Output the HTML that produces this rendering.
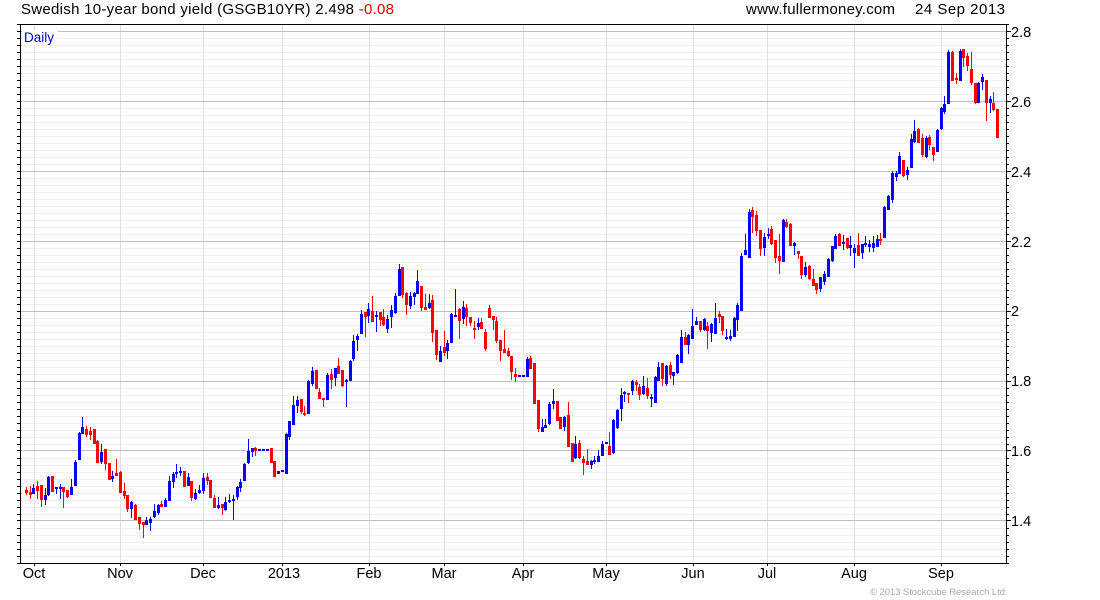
<!DOCTYPE html>
<html><head><meta charset="utf-8"><title>Swedish 10-year bond yield</title>
<style>
html,body{margin:0;padding:0;background:#fff;width:1100px;height:600px;overflow:hidden}
svg{display:block}
text{font-family:"Liberation Sans",Arial,sans-serif;fill:#000;font-size:15px}
.a{font-size:14.5px}
.m{text-anchor:middle}
</style></head><body>
<svg id="c" xmlns="http://www.w3.org/2000/svg" width="1100" height="600" viewBox="0 0 1100 600">
<g id="grid" shape-rendering="crispEdges"></g>
<rect x="22" y="30" width="36" height="15" fill="#fff"/>
<g id="candles" shape-rendering="crispEdges"></g>
<g id="frame" shape-rendering="crispEdges"></g>
<text x="21" y="14" textLength="373" lengthAdjust="spacing">Swedish 10-year bond yield (GSGB10YR) 2.498 <tspan style="fill:#e00000">-0.08</tspan></text>
<text x="746" y="14" textLength="149" lengthAdjust="spacing">www.fullermoney.com</text>
<text x="915" y="14" textLength="90" lengthAdjust="spacing">24 Sep 2013</text>
<text x="24" y="42" style="fill:#0000d0;font-size:13.5px">Daily</text>
<text class="a" x="1011" y="37">2.8</text>
<text class="a" x="1011" y="107">2.6</text>
<text class="a" x="1011" y="177">2.4</text>
<text class="a" x="1011" y="247">2.2</text>
<text class="a" x="1011" y="316">2</text>
<text class="a" x="1011" y="386">1.8</text>
<text class="a" x="1011" y="456">1.6</text>
<text class="a" x="1011" y="526">1.4</text>
<text class="a m" x="34" y="578">Oct</text>
<text class="a m" x="120" y="578">Nov</text>
<text class="a m" x="203" y="578">Dec</text>
<text class="a m" x="284" y="578">2013</text>
<text class="a m" x="369" y="578">Feb</text>
<text class="a m" x="444" y="578">Mar</text>
<text class="a m" x="523" y="578">Apr</text>
<text class="a m" x="606" y="578">May</text>
<text class="a m" x="693" y="578">Jun</text>
<text class="a m" x="767" y="578">Jul</text>
<text class="a m" x="854" y="578">Aug</text>
<text class="a m" x="941" y="578">Sep</text>
<text x="870" y="595" textLength="135" lengthAdjust="spacing" style="fill:#aaa;font-size:9.5px">© 2013 Stockcube Research Ltd</text>
</svg>
<script>
var S=[
[400,"262,285,270,279,r 258,297,276,285,r 252,282,264,282,b 243,297,258,273,r 255,321,256,300,r 264,315,285,300,b 228,288,231,285,b 228,276,228,276,r 261,282,261,267,b 252,297,261,267,b 261,324,261,276,r 270,294,270,291,r 237,285,261,285,b 180,258,186,258,b 96,180,99,180,b 51,102,81,102,b 78,111,87,105,r 81,120,93,105,r 87,132,87,132,r 120,189,123,189,r 132,192,156,186,b 147,210,147,192,r 189,240,189,240,r 213,246,228,237,b 177,228,219,228,r 213,279,216,279,r 249,297,273,288,r 285,336,285,327,r 303,354,306,327,b 312,360,315,360,r 351,390,351,372,r 366,414,366,375,r 351,375,360,375,b 351,393,357,369,b 312,354,333,351,b 312,345,315,339,b"],
[420,"243,262,252,261,r 234,261,240,261,b 168,243,183,243,b 156,204,162,186,b 132,174,156,162,b 141,168,153,159,b 153,201,153,201,r 159,198,171,198,b 183,243,183,234,r 207,240,219,237,b 195,222,210,219,b 159,222,174,213,b 159,195,171,183,r 180,234,180,234,r 225,264,234,264,r 231,267,255,264,b 252,285,252,264,r 231,273,246,270,b 222,249,240,246,b 225,300,237,243,b 198,240,201,231,b 177,216,186,204,b 129,183,132,183,b 57,132,93,129,b 84,111,84,96,b 81,108,84,93,r 88,92,88,92,b 88,92,88,92,b 88,92,88,92,b 84,129,84,129,r 123,171,123,171,r 153,162,153,162,b 150,156,150,156,b"],
[260,"519,642,522,642,b 483,540,483,531,b 408,495,435,495,b 408,459,420,438,b 417,462,417,456,r 438,468,459,465,r 360,462,363,462,b 321,378,333,372,b 330,387,330,387,r 384,417,396,417,r 414,441,414,420,r 339,420,345,420,b 327,387,342,360,r 324,378,324,354,b 294,342,318,342,r 330,381,330,378,r 357,441,360,366,b 300,363,303,363,b 225,303,243,297,b 222,273,228,240,b 150,222,162,222,b 156,231,156,171,r 129,189,147,168,b 108,186,153,186,r 153,216,165,171,b 156,198,156,180,r 147,198,171,195,r 165,219,177,207,b 135,204,150,171,b 99,162,108,159,b 12,108,27,108,b 21,114,21,105,r 96,165,99,135,r 96,147,108,138,b 96,135,99,111,b 30,102,63,102,b 78,153,78,144,r 102,150,141,150,r 102,147,129,144,b"],
[280,"45,186,60,159,r 150,240,150,225,r 198,246,213,246,b 153,228,201,219,r 180,237,189,213,b 99,189,102,189,b 27,111,105,111,b 84,177,87,123,r 63,132,81,117,b 72,138,84,111,r 111,138,111,129,r 123,177,144,150,r 114,150,129,141,b 114,147,126,147,r 147,213,156,207,r 75,114,84,114,r 108,150,108,120,r 111,189,123,183,r 180,243,180,213,r 150,219,207,219,r 204,231,213,228,r 228,300,228,276,r 264,306,282,291,r 285,291,285,291,b 285,291,285,291,b 231,291,237,291,b 228,267,234,267,r 249,372,249,372,r 360,456,360,447,r 417,456,441,456,b 417,444,435,444,b 366,435,372,432,b 327,387,363,372,b 363,423,363,423,r 411,447,411,447,r 408,453,411,441,b 366,500,405,500,r 489,546,489,546,r 468,537,492,534,b 480,537,489,534,r 528,585,537,549,r 507,555,543,555,r 540,567,543,555,b 528,552,540,546,b 510,546,528,546,b"],
[300,"423,468,432,468,b 426,432,426,432,b 396,465,438,465,r 357,462,360,459,b 327,387,330,384,b 264,363,285,327,b 273,306,276,282,b 279,309,279,285,r 240,285,243,273,b 240,273,246,255,r 252,300,261,285,r 228,285,258,282,b 234,297,264,288,r 282,321,291,297,b 228,309,231,309,b 186,243,201,243,b 189,258,189,237,r 195,258,198,252,b 186,237,195,225,r 216,255,216,228,b 162,222,165,219,b 90,189,111,189,b 96,135,111,135,r 102,162,105,135,b 27,117,78,117,b 51,75,63,75,b 63,96,63,90,r 54,93,57,90,b 66,147,78,93,r 69,126,72,99,b 9,102,54,102,b 33,69,42,51,r 48,105,48,93,r 87,120,111,117,b 90,123,108,117,b 51,111,54,111,b 9,93,15,60,b"],
[200,"159,333,168,333,b 102,165,150,165,b 27,174,36,174,b 21,99,30,51,r 33,108,45,93,r 90,168,90,147,r 99,168,111,144,b 84,117,102,108,b 78,135,87,132,r 120,189,120,174,r 102,222,168,183,r 57,186,60,186,b 57,84,66,81,r 69,138,72,138,r 126,165,129,138,b 153,177,153,162,r 168,237,168,225,r 186,231,201,225,b 195,240,198,237,r 207,258,237,258,r 249,282,249,270,r 231,276,231,267,b 213,255,222,246,b 174,231,177,231,b 138,186,138,183,b 102,147,108,147,b 99,138,102,138,r 105,150,126,132,b 114,147,114,144,r 108,168,135,144,b 132,204,144,159,b 99,168,135,168,r 132,177,132,159,b 108,141,129,135,b 120,156,132,141,b 108,156,129,144,b 105,141,117,141,b"],
[40,"579,615,597,603,r 498,594,501,594,b 465,510,468,510,b 393,489,399,480,b 393,423,399,411,b 336,402,348,402,b 360,411,360,408,r 381,420,390,405,b 282,384,297,384,b 240,309,273,306,b 264,309,267,309,r 282,351,294,345,r 288,354,294,351,b 285,330,291,315,r 321,363,321,345,r 267,336,270,336,b 201,270,204,267,b 168,222,192,216,b 30,192,36,192,b 33,123,36,123,r 99,132,114,120,r 27,123,33,123,b 27,81,27,54,r 39,93,48,78,r 36,135,87,129,r 129,192,129,189,r 126,189,129,189,b 102,150,111,126,b 120,243,120,189,r 168,219,177,189,b 156,213,189,210,r 207,294,207,294,r"]
];
var NS="http://www.w3.org/2000/svg";
function R(g,x,y,w,h,f){var r=document.createElementNS(NS,"rect");r.setAttribute("x",x);r.setAttribute("y",y);r.setAttribute("width",w);r.setAttribute("height",h);r.setAttribute("fill",f);g.appendChild(r);}
var G=document.getElementById("grid"),C=document.getElementById("candles"),F=document.getElementById("frame");
var k,y;
for(k=-1;k<=76;k++){y=Math.round(31.3+6.99*k);
 if(k%10===0)continue;
 R(G,21,y,985,1,"#f0f0f0");
 R(F,17,y,3,1,"#000");R(F,1007,y,2,1,"#000");
}
[34,120,203,282,369,444,523,606,693,767,854,941].forEach(function(x){R(G,x,25,1,538,"#e0e0e0");R(F,x,564,1,2,"#000");});
[31,101,171,241,311,381,450,520].forEach(function(y){R(G,21,y,985,1,"#c0c0c0");R(F,17,y,3,1,"#000");R(F,1007,y,4,1,"#000");});
R(F,20,24,987,1,"#000");R(F,20,563,987,1,"#000");R(F,20,24,1,540,"#000");R(F,1006,24,1,540,"#000");
var i=0;
S.forEach(function(s){
 var o=s[0];
 s[1].split(" ").forEach(function(e){
  var p=e.split(","),x=Math.floor(26.3+3.765*i),col=p[4]==="r"?"#ff0000":"#0000ff";
  var wt=Math.round(o+p[0]/3),wb=Math.round(o+p[1]/3),bt=Math.round(o+p[2]/3),bb=Math.round(o+p[3]/3);
  if(bb<=bt)bb=bt+2;
  if(wb>wt)R(C,x,wt,1,wb-wt,col);
  R(C,x-1,bt,3,bb-bt,col);
  i++;
 });
});
</script>
</body></html>
